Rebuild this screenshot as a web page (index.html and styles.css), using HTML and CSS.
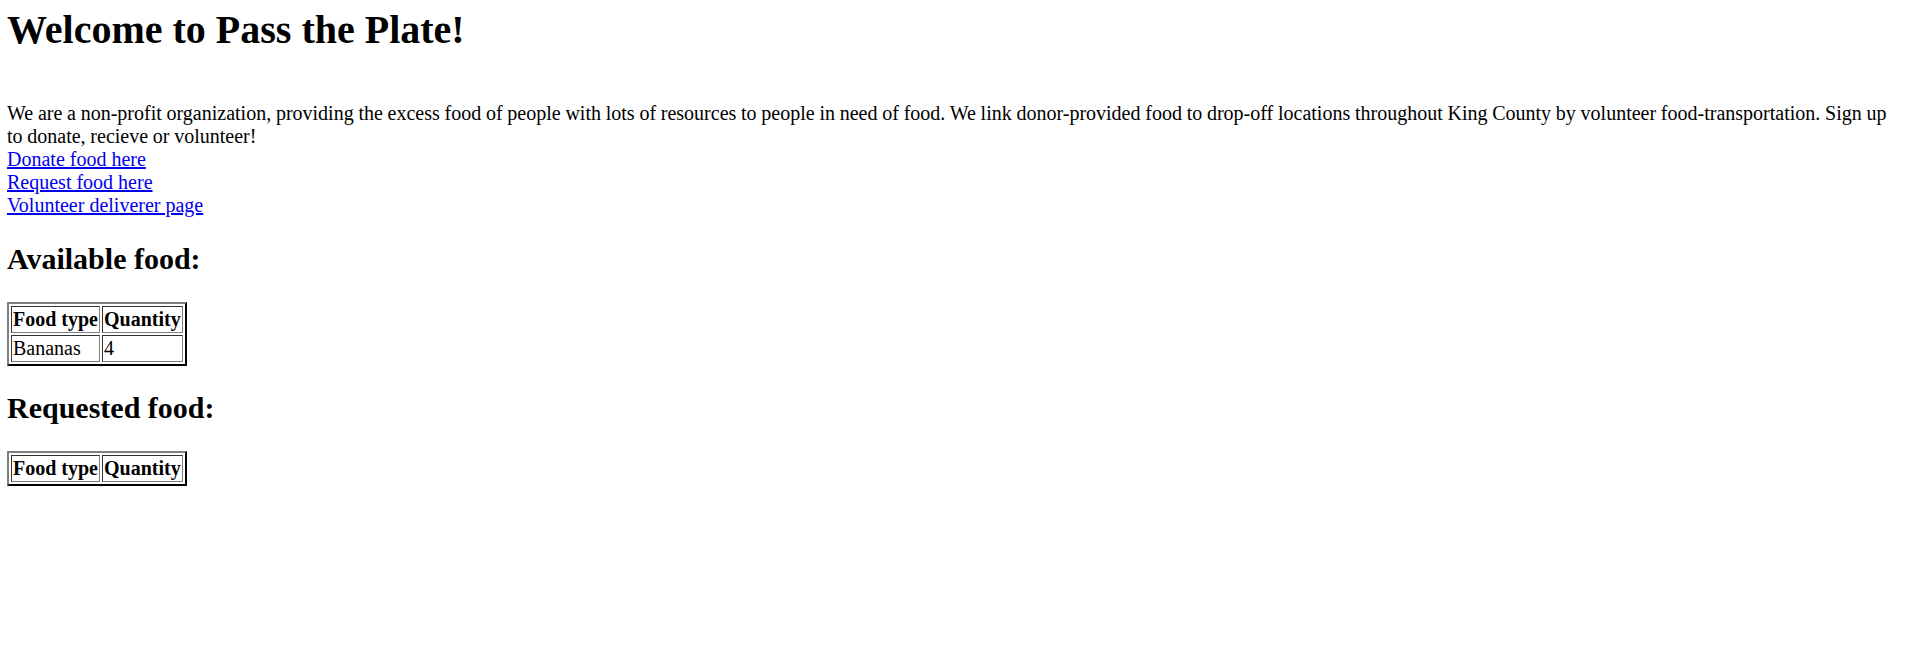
FILE: index.html
```html
<!DOCTYPE html>
<html lang="en">
<head>
    <meta charset="UTF-8">
    <title>Pass the Plate</title>
    <link rel="stylesheet" href="styles.css">
</head>
<body>
    <h1 class="title">Welcome to Pass the Plate!</h1>
    <p class="intro">We are a non-profit organization, providing the excess food of people with lots of resources to people in need of food. We link donor-provided food to drop-off locations throughout King County by volunteer food-transportation. Sign up to donate, recieve or volunteer!</p>
    <div class="links">
        <a href="#">Donate food here</a>
        <a href="#">Request food here</a>
        <a href="#">Volunteer deliverer page</a>
    </div>

    <h2 class="section">Available food:</h2>
    <table class="food">
        <tr><th>Food type</th><th>Quantity</th></tr>
        <tr><td>Bananas</td><td>4</td></tr>
    </table>

    <h2 class="section">Requested food:</h2>
    <table class="food">
        <tr><th>Food type</th><th>Quantity</th></tr>
    </table>
</body>
</html>
```

FILE: styles.css
```css
body{
    margin: 6px 7px;
    font-family: "Liberation Serif", "Times New Roman", serif;
    font-size: 20px;
    color: #000;
    background: #fff;
}
.title{
    font-size: 40px;
    margin: 0 0 49px;
}
.intro{
    margin: 0;
    word-spacing: -0.25px;
}
.links a{
    display: block;
    color: #0000ee;
}
.section{
    font-size: 30px;
    margin: 25px 0 26px;
}
.food{
    border: 2px outset #808080;
    border-color: #808080 #333 #333 #808080;
    border-spacing: 2px;
}
.food th,
.food td{
    border: 1px solid;
    border-color: #333 #808080 #808080 #333;
    padding: 1px;
    text-align: left;
}
.food th{
    text-align: center;
}
```
